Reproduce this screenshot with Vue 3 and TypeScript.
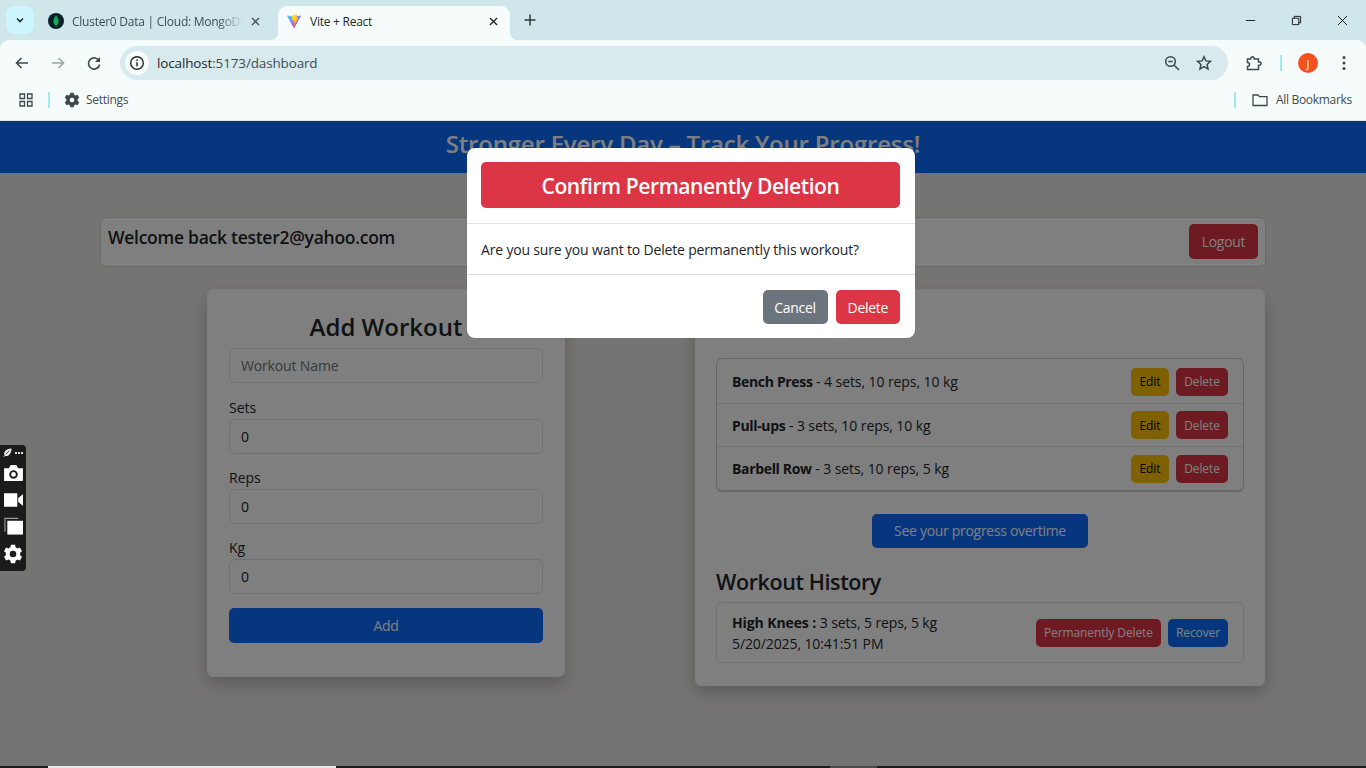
<template>
  <div class="screen">
    <div class="tabstrip">
      <button class="tab-search" aria-label="Search tabs">
        <svg viewBox="0 0 12 12" width="12" height="12"><path d="M3 4.500 6 7.500 9 4.500" fill="none" stroke="#1f2a2c" stroke-width="1.600" /></svg>
      </button>
      <div class="tab inactive">
        <svg class="favicon" viewBox="0 0 16 16"><circle cx="8" cy="8" r="8" fill="#06232c" /><path d="M8 2.200C6 4.800 5.400 6.800 5.400 8.400c0 2 1.300 3.200 2.200 3.800l.2 1.800h.5l.2-1.800c.9-.6 2.100-1.800 2.100-3.800 0-1.600-.7-3.600-2.600-6.200Z" fill="#13aa52" /></svg>
        <span class="tab-title">Cluster0 Data | Cloud: MongoDB</span>
        <svg class="tab-close" viewBox="0 0 10 10"><path d="M1 1 9 9M9 1 1 9" stroke="#3d4a4d" stroke-width="1.400" /></svg>
      </div>
      <div class="tab active">
        <svg class="favicon" viewBox="0 0 32 32">
          <defs>
            <linearGradient id="vite-a" x1="6" y1="3" x2="22" y2="26" gradientUnits="userSpaceOnUse">
              <stop offset="0" stop-color="#41d1ff" />
              <stop offset="1" stop-color="#bd34fe" />
            </linearGradient>
            <linearGradient id="vite-b" x1="15" y1="3" x2="18" y2="24" gradientUnits="userSpaceOnUse">
              <stop offset="0" stop-color="#ffea83" />
              <stop offset=".1" stop-color="#ffdd35" />
              <stop offset="1" stop-color="#ffa800" />
            </linearGradient>
          </defs>
          <path d="M29.880 6.146 16.700 29.708a.72.72 0 0 1-1.250 0L2.120 6.146a.72.72 0 0 1 .750-1.060L16.070 7.490a.7.7 0 0 0 .250 0l13-2.400a.72.72 0 0 1 .760 1.060Z" fill="url(#vite-a)" />
          <path d="M22.600 2.300 12.800 4.200a.36.36 0 0 0-.29.33l-.6 10.200a.36.36 0 0 0 .44.37l2.730-.63a.36.36 0 0 1 .43.42l-.8 3.960a.36.36 0 0 0 .46.42l1.690-.51a.36.36 0 0 1 .46.42l-1.300 6.260c-.08.39.44.6.66.27l.14-.22 8-15.970a.36.36 0 0 0-.39-.51l-2.810.54a.36.36 0 0 1-.41-.45l1.840-6.370a.36.36 0 0 0-.42-.45Z" fill="url(#vite-b)" />
        </svg>
        <span class="tab-title">Vite + React</span>
        <svg class="tab-close" viewBox="0 0 10 10"><path d="M1 1 9 9M9 1 1 9" stroke="#1f2a2c" stroke-width="1.500" /></svg>
      </div>
      <svg class="new-tab" viewBox="0 0 12 12"><path d="M6 .5v11M.5 6h11" stroke="#2f3a3d" stroke-width="1.500" /></svg>
      <div class="window-controls">
        <svg viewBox="0 0 12 12"><path d="M1 6h10" stroke="#111" stroke-width="1" /></svg>
        <svg viewBox="0 0 12 12"><path d="M1.500 3.500h7v7h-7zM3.500 3.500v-2h7v7h-2" fill="none" stroke="#111" stroke-width="1" /></svg>
        <svg viewBox="0 0 12 12"><path d="M1 1 11 11M11 1 1 11" stroke="#111" stroke-width="1" /></svg>
      </div>
    </div>

    <div class="toolbar">
      <svg class="tool" viewBox="0 0 16 16"><path d="M14 8H3M7.500 3 2.500 8l5 5" fill="none" stroke="#3d4a4d" stroke-width="1.600" /></svg>
      <svg class="tool" viewBox="0 0 16 16"><path d="M2 8h11M8.500 3l5 5-5 5" fill="none" stroke="#9aa5a8" stroke-width="1.600" /></svg>
      <svg class="tool reload" viewBox="0 0 16 16"><path d="M13.200 6.200A5.600 5.600 0 1 0 13.600 9.500" fill="none" stroke="#3d4a4d" stroke-width="1.600" /><path d="M14 2v5H9Z" fill="#3d4a4d" /></svg>
      <div class="omnibox">
        <span class="site-info">
          <svg viewBox="0 0 16 16" width="16" height="16"><circle cx="8" cy="8" r="6.300" fill="none" stroke="#27272a" stroke-width="1.400" /><path d="M8 7.200v4M8 4.500v1.500" stroke="#27272a" stroke-width="1.500" /></svg>
        </span>
        <span class="url"><span class="host">localhost</span>:5173/dashboard</span>
        <svg class="omni-icon" viewBox="0 0 16 16"><circle cx="6.500" cy="6.500" r="4.800" fill="none" stroke="#3d4a4d" stroke-width="1.500" /><path d="M10 10l5 5M4.300 6.500h4.400" stroke="#3d4a4d" stroke-width="1.500" /></svg>
        <svg class="omni-icon" viewBox="0 0 16 16"><path d="m8 1.700 1.900 4.200 4.600.5-3.400 3.100.9 4.500-4-2.300-4 2.300.9-4.500-3.400-3.100 4.600-.5Z" fill="none" stroke="#3d4a4d" stroke-width="1.500" /></svg>
      </div>
      <svg class="tool ext" viewBox="0 0 16 16"><path d="M1.500 4h3.200a1.800 1.800 0 0 1 3.600-.6V4h4.200v3h1a1.600 1.600 0 0 1 0 3.200h-1V14.500H1.500v-3a2 2 0 0 0 0-4Z" fill="none" stroke="#3d4a4d" stroke-width="1.500" /></svg>
      <span class="sep"></span>
      <span class="avatar">J</span>
      <svg class="tool menu" viewBox="0 0 16 16"><circle cx="8" cy="2.600" r="1.500" fill="#3d4a4d" /><circle cx="8" cy="8" r="1.500" fill="#3d4a4d" /><circle cx="8" cy="13.400" r="1.500" fill="#3d4a4d" /></svg>
    </div>

    <div class="bookmarks">
      <svg class="apps" viewBox="0 0 14 14"><path d="M1 1h4.500v4.500H1zM8.500 1H13v4.500H8.500zM1 8.500h4.500V13H1zM8.500 8.500H13V13H8.500z" fill="none" stroke="#3d4a4d" stroke-width="1.300" /></svg>
      <span class="sep"></span>
      <svg class="gear" viewBox="0 0 24 24"><path fill="#3d4a4d" fill-rule="evenodd" d="M9.500 1h5l.6 3 2.300 1.300 2.900-1 2.500 4.300-2.300 2a7 7 0 0 1 0 2.800l2.300 2-2.500 4.300-2.900-1-2.300 1.300-.6 3h-5l-.6-3-2.300-1.300-2.900 1-2.500-4.300 2.300-2a7 7 0 0 1 0-2.800l-2.300-2 2.500-4.300 2.900 1 2.300-1.300ZM12 8.500a3.500 3.500 0 1 0 0 7 3.500 3.500 0 0 0 0-7Z" /></svg>
      <span class="bm-label">Settings</span>
      <span class="bm-spacer"></span>
      <span class="sep"></span>
      <svg class="folder" viewBox="0 0 16 16"><path d="M1 3h5l1.500 1.700H15v8.800H1Z" fill="none" stroke="#3d4a4d" stroke-width="1.300" /></svg>
      <span class="bm-label">All Bookmarks</span>
    </div>

    <div class="viewport">
      <header class="app-header">Stronger Every Day – Track Your Progress!</header>

      <div class="welcome">
        <span class="welcome-text">Welcome back tester2@yahoo.com</span>
        <button class="btn btn-danger logout">Logout</button>
      </div>

      <main class="columns">
        <section class="card add-card">
          <h2 class="add-title">Add Workout</h2>
          <input class="field" type="text" placeholder="Workout Name" />
          <label v-for="f in fields" :key="f" class="field-label">
            <span>{{ f }}</span>
            <input class="field" type="text" value="0" />
          </label>
          <button class="btn btn-primary add-btn">Add</button>
        </section>

        <section class="card list-card">
          <ul class="list">
            <li v-for="w in workouts" :key="w.name" class="row">
              <span><strong>{{ w.name }}</strong> - {{ w.detail }}</span>
              <span class="row-actions">
                <button class="btn btn-warning small edit">Edit</button>
                <button class="btn btn-danger small del">Delete</button>
              </span>
            </li>
          </ul>
          <button class="btn btn-primary progress-btn">See your progress overtime</button>
          <h3 class="history-title">Workout History</h3>
          <div class="history">
            <div>
              <div><strong>High Knees :</strong> 3 sets, 5 reps, 5 kg</div>
              <div>5/20/2025, 10:41:51 PM</div>
            </div>
            <span class="row-actions">
              <button class="btn btn-danger small">Permanently Delete</button>
              <button class="btn btn-primary small">Recover</button>
            </span>
          </div>
        </section>
      </main>

      <div class="backdrop"></div>

      <div class="modal">
        <div class="modal-header">
          <h4 class="modal-title">Confirm Permanently Deletion</h4>
        </div>
        <div class="modal-body">Are you sure you want to Delete permanently this workout?</div>
        <div class="modal-footer">
          <button class="btn btn-secondary cancel">Cancel</button>
          <button class="btn btn-danger">Delete</button>
        </div>
      </div>

      <div class="capture-bar">
        <div class="capture-top">
          <svg viewBox="0 0 10 10" width="9" height="9"><path fill="#e8e8e8" d="M9.500.5C6 .5 2.500 2 1.500 5c-.4 1.300-.2 2.300.3 3l-1.300 1.500.6.5L2.500 8.700c1 .5 2.300.4 3.500-.4C8.300 6.800 9.500 3.500 9.500.5Z" /><path stroke="#1b1b1b" stroke-width=".8" d="M3 7 7 3" /></svg>
          <span class="dots"><i></i><i></i><i></i></span>
        </div>
        <svg class="cap-camera" viewBox="0 0 20 17" width="19" height="16"><path fill="#fff" fill-rule="evenodd" d="M0 3.500h5L7 0h6l2 3.500h5V17H0Zm10 2a4.500 4.500 0 1 0 0 9 4.500 4.500 0 0 0 0-9Zm0 2a2.500 2.500 0 1 1 0 5 2.500 2.500 0 0 1 0-5Z" /></svg>
        <svg class="cap-video" viewBox="0 0 20 14" width="19" height="14"><path fill="#fff" d="M0 0h14v14H0Zm15 5 5-4v12l-5-4Z" /></svg>
        <svg class="cap-copy" viewBox="0 0 20 18" width="19" height="18"><path fill="none" stroke="#9a9a9a" stroke-width="1.200" d="M1 15V1h14" /><path fill="#fff" d="M3.500 3.500H20V18H3.500Z" /></svg>
        <svg class="cap-gear" viewBox="0 0 24 24" width="20" height="20"><path fill="#fff" fill-rule="evenodd" d="M9.500 1h5l.6 3 2.300 1.300 2.900-1 2.500 4.300-2.300 2a7 7 0 0 1 0 2.800l2.300 2-2.500 4.300-2.900-1-2.300 1.300-.6 3h-5l-.6-3-2.300-1.300-2.900 1-2.500-4.300 2.300-2a7 7 0 0 1 0-2.800l-2.300-2 2.500-4.300 2.900 1 2.300-1.300ZM12 8a4 4 0 1 0 0 8 4 4 0 0 0 0-8Z" /></svg>
      </div>
    </div>

    <div class="taskbar">
      <span class="task-light"></span>
      <span class="task-grey"></span>
    </div>
  </div>
</template>

<script setup lang="ts">
const fields = ['Sets', 'Reps', 'Kg']

const workouts = [
  { name: 'Bench Press', detail: '4 sets, 10 reps, 10 kg' },
  { name: 'Pull-ups', detail: '3 sets, 10 reps, 10 kg' },
  { name: 'Barbell Row', detail: '3 sets, 10 reps, 5 kg' }
]
</script>

<style>
html,
body {
  margin: 0;
  overflow: hidden;
}
</style>

<style scoped>
.screen {
  width: 1366px;
  height: 768px;
  display: flex;
  flex-direction: column;
  overflow: hidden;
  background: #cfe6ea;
  font-family: 'Open Sans', 'Noto Sans', sans-serif;
  color: #212529;
}

/* browser chrome */
.tabstrip {
  height: 40px;
  flex: none;
  display: flex;
  align-items: flex-end;
  padding-left: 6px;
}
.tab-search {
  width: 28px;
  height: 28px;
  margin: 0 6px 6px 0;
  border: 0;
  border-radius: 8px;
  background: #cdf5fd;
  display: flex;
  align-items: center;
  justify-content: center;
  padding: 0;
}
.tab {
  position: relative;
  height: 34px;
  box-sizing: border-box;
  display: flex;
  align-items: center;
  font-size: 12px;
  letter-spacing: -0.25px;
  color: #3f4d50;
}
.tab.inactive {
  width: 238px;
  padding: 0 18px 4px 8px;
}
.tab.active {
  width: 232px;
  padding: 0 12px 4px 8px;
  background: #f6fbfb;
  border-radius: 9px 9px 0 0;
  color: #1f2a2c;
}
.tab.active::before,
.tab.active::after {
  content: '';
  position: absolute;
  bottom: 0;
  width: 8px;
  height: 8px;
}
.tab.active::before {
  left: -8px;
  background: radial-gradient(circle at 0 0, transparent 8px, #f6fbfb 8.500px);
}
.tab.active::after {
  right: -8px;
  background: radial-gradient(circle at 100% 0, transparent 8px, #f6fbfb 8.500px);
}
.favicon {
  width: 16px;
  height: 16px;
  flex: none;
  margin-right: 8px;
}
.tab-title {
  flex: 1;
  white-space: nowrap;
  overflow: hidden;
  -webkit-mask-image: linear-gradient(90deg, #000 85%, transparent);
  mask-image: linear-gradient(90deg, #000 85%, transparent);
}
.tab.active .tab-title {
  -webkit-mask-image: none;
  mask-image: none;
}
.tab-close {
  width: 9px;
  height: 9px;
  flex: none;
  margin: 0 0 0 8px;
}
.new-tab {
  width: 12px;
  height: 12px;
  margin: 0 0 14px 14px;
}
.window-controls {
  margin-left: auto;
  height: 40px;
  display: flex;
  align-items: center;
}
.window-controls svg {
  width: 11px;
  height: 11px;
  margin-right: 35px;
}
.window-controls svg:last-child {
  margin-right: 18px;
}

.toolbar {
  height: 46px;
  flex: none;
  box-sizing: border-box;
  background: #f6fbfb;
  border-radius: 9px 9px 0 0;
  display: flex;
  align-items: center;
  padding: 6px 14px 6px 14px;
}
.tool {
  width: 16px;
  height: 16px;
  flex: none;
  margin-right: 20px;
}
.tool.reload {
  margin-right: 18px;
}
.omnibox {
  width: 1108px;
  height: 34px;
  flex: none;
  display: flex;
  align-items: center;
  border-radius: 17px;
  background: #d9eaee;
  padding: 0 16px 0 5px;
  box-sizing: border-box;
}
.site-info {
  width: 24px;
  height: 24px;
  border-radius: 50%;
  background: #f6fbfb;
  display: flex;
  align-items: center;
  justify-content: center;
  margin-right: 8px;
}
.url {
  flex: 1;
  font-size: 13.500px;
  letter-spacing: -0.15px;
  color: #3f4d50;
}
.host {
  color: #1f2a2c;
}
.omni-icon {
  width: 16px;
  height: 16px;
  margin-left: 16px;
}
.tool.ext {
  margin: 0 18px;
}
.sep {
  width: 2px;
  height: 16px;
  flex: none;
  background: #9fe9f7;
}
.avatar {
  width: 20px;
  height: 20px;
  margin: 0 18px 0 16px;
  border-radius: 50%;
  background: #f4511e;
  color: #fff;
  font-size: 11px;
  display: flex;
  align-items: center;
  justify-content: center;
}
.tool.menu {
  margin: 0;
}

.bookmarks {
  height: 35px;
  flex: none;
  box-sizing: border-box;
  background: #f6fbfb;
  border-bottom: 1px solid #dfe6e8;
  display: flex;
  align-items: center;
  padding: 0 14px 6px 19px;
  font-size: 12px;
  letter-spacing: -0.3px;
  color: #3f4d50;
}
.bm-label {
  margin-top: -2px;
}
.apps {
  width: 14px;
  height: 14px;
  margin-right: 15px;
}
.gear {
  width: 16px;
  height: 16px;
  margin: 0 6px 0 14px;
}
.bm-spacer {
  flex: 1;
}
.folder {
  width: 16px;
  height: 16px;
  margin: 0 8px 0 16px;
}

/* page */
.viewport {
  position: relative;
  flex: 1;
  background: #e9e8e4;
  display: flex;
  flex-direction: column;
}
.app-header {
  height: 52px;
  flex: none;
  box-sizing: border-box;
  padding-bottom: 7px;
  background: #0d6efd;
  color: #fff;
  font-size: 24px;
  font-weight: 600;
  letter-spacing: -0.2px;
  display: flex;
  align-items: center;
  justify-content: center;
}
.welcome {
  margin: 44px 100px 0;
  height: 50px;
  box-sizing: border-box;
  border: 1px solid #d0d3d6;
  border-radius: 6px;
  background: #fff;
  padding: 0 7px;
  display: flex;
  align-items: flex-start;
  justify-content: space-between;
}
.welcome-text {
  font-size: 17.500px;
  font-weight: 600;
  letter-spacing: -0.27px;
  margin-top: 7px;
}
.btn.logout {
  margin-top: 6px;
  width: 69px;
  height: 35px;
  padding: 0;
}
.columns {
  margin: 22px 101px 0 207px;
  display: flex;
  align-items: flex-start;
  justify-content: space-between;
}
.card {
  box-sizing: border-box;
  background: #fff;
  border-radius: 6px;
  box-shadow: 0 8px 16px rgba(0, 0, 0, 0.2);
  border: 1px solid #fafafa;
}
.add-card {
  width: 358px;
  height: 388px;
  padding: 20px 21px;
  display: flex;
  flex-direction: column;
}
.add-title {
  margin: 0 0 5px;
  text-align: center;
  font-size: 24px;
  line-height: 33px;
  font-weight: 600;
}
.field {
  width: 100%;
  height: 35px;
  flex: none;
  box-sizing: border-box;
  border: 1px solid #dee2e6;
  border-radius: 6px;
  background: #fff;
  padding: 0 11px;
  font: inherit;
  font-size: 14px;
  letter-spacing: -0.15px;
  color: #212529;
  outline: none;
}
.field::placeholder {
  color: #6c757d;
}
.field-label {
  display: block;
  margin-top: 14px;
  font-size: 14px;
  line-height: 20px;
}
.add-title + .field + .field-label {
  margin-top: 15px;
}
.field-label .field {
  display: block;
  margin-top: 1px;
}
.btn.add-btn {
  margin-top: 14px;
  height: 35px;
  flex: none;
}
.list-card {
  width: 570px;
  height: 397px;
  padding: 68px 20px 0;
}
.list {
  list-style: none;
  margin: 0;
  padding: 0;
  border: 1px solid #cfcfcf;
  border-bottom-width: 2px;
  border-radius: 6px;
}
.row {
  height: 44px;
  box-sizing: border-box;
  padding: 0 15px;
  display: flex;
  align-items: center;
  justify-content: space-between;
  font-size: 14px;
  letter-spacing: -0.08px;
}
.row:first-child {
  padding-top: 1px;
}
.row:nth-child(2) {
  height: 43px;
}
.row + .row {
  border-top: 1px solid #dee2e6;
}
strong {
  font-weight: 700;
}
.row strong {
  letter-spacing: -0.34px;
}
.row-actions {
  display: flex;
  gap: 7px;
}
.btn.progress-btn {
  display: block;
  width: 216px;
  height: 34px;
  margin: 22px auto 0;
  padding-bottom: 2px;
}
.history-title {
  margin: 19px 0 6px;
  font-size: 21.500px;
  line-height: 29px;
  font-weight: 600;
  letter-spacing: -0.4px;
}
.history {
  height: 61px;
  box-sizing: border-box;
  padding: 0 15px;
  border: 1px solid #dee2e6;
  border-radius: 6px;
  display: flex;
  align-items: center;
  justify-content: space-between;
  font-size: 14px;
  line-height: 21px;
  letter-spacing: -0.1px;
}

/* buttons */
.btn {
  border: 1px solid transparent;
  border-radius: 5px;
  color: #fff;
  font: inherit;
  font-size: 14px;
  letter-spacing: -0.3px;
  height: 34px;
  padding: 0 11px;
}
.btn.cancel {
  width: 65px;
  padding: 0;
}
.btn.small {
  height: 28px;
  font-size: 12px;
  padding: 0 7px;
  letter-spacing: -0.1px;
}
.btn.small.edit {
  width: 38px;
  padding: 0;
}
.btn.small.del {
  width: 52px;
  padding: 0;
}
.btn-primary {
  background: #0d6efd;
}
.btn-danger {
  background: #dc3545;
}
.btn-secondary {
  background: #6c757d;
}
.btn-warning {
  background: #ffc107;
  color: #000;
}

/* overlays */
.backdrop {
  position: absolute;
  inset: 0;
  background: rgba(0, 0, 0, 0.5);
}
.modal {
  position: absolute;
  left: 467px;
  top: 27px;
  width: 448px;
  height: 190px;
  background: #fff;
  border-radius: 8px;
  display: flex;
  flex-direction: column;
}
.modal-header {
  height: 76px;
  flex: none;
  box-sizing: border-box;
  padding: 14px 15px 15px 14px;
  border-bottom: 1px solid #dee2e6;
}
.modal-title {
  margin: 0;
  height: 46px;
  box-sizing: border-box;
  padding-top: 2px;
  border-radius: 5px;
  background: #dc3545;
  color: #fff;
  font-size: 21px;
  font-weight: 600;
  letter-spacing: -0.4px;
  display: flex;
  align-items: center;
  justify-content: center;
}
.modal-body {
  height: 51px;
  box-sizing: border-box;
  flex: none;
  padding: 0 14px;
  display: flex;
  align-items: center;
  font-size: 14px;
  letter-spacing: -0.17px;
  border-bottom: 1px solid #dee2e6;
}
.modal-footer {
  flex: 1;
  display: flex;
  justify-content: flex-end;
  align-items: flex-start;
  gap: 8px;
  padding: 15px 15px 0 0;
}
.capture-bar {
  position: absolute;
  left: 0;
  top: 324px;
  width: 26px;
  height: 126px;
  background: #1b1b1b;
  border-radius: 0 4px 4px 0;
  display: flex;
  flex-direction: column;
  align-items: center;
  padding-top: 3px;
  box-sizing: border-box;
}
.capture-top {
  height: 9px;
  display: flex;
  align-items: center;
  gap: 3px;
}
.dots {
  display: flex;
  gap: 1px;
}
.dots i {
  width: 2px;
  height: 2px;
  background: #ddd;
}
.cap-camera {
  margin-top: 8px;
}
.cap-video {
  margin-top: 12px;
}
.cap-copy {
  margin-top: 10px;
}
.cap-gear {
  margin-top: 9px;
}
.taskbar {
  height: 2px;
  flex: none;
  background: #1c1c1c;
  display: flex;
}
.task-light {
  width: 288px;
  margin-left: 48px;
  background: #e9e9e9;
}
.task-grey {
  width: 47px;
  margin-left: 494px;
  background: #4a4a4a;
}
</style>
